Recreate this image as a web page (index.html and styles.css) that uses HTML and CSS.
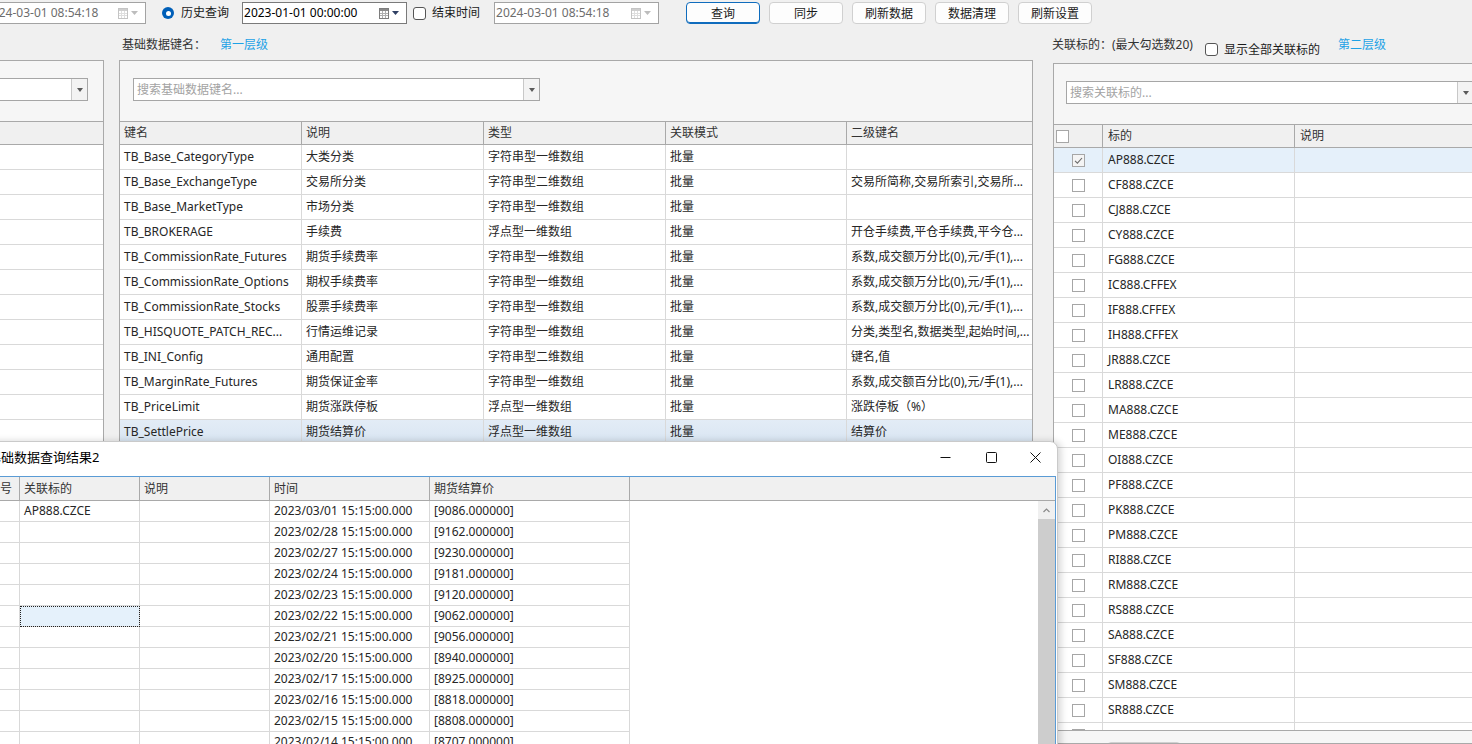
FILE: index.html
```html
<!DOCTYPE html>
<html lang="zh-CN">
<head>
<meta charset="utf-8">
<title>基础数据</title>
<link rel="stylesheet" href="styles.css">
</head>
<body>
<div class="toolbar">
  <div class="dt dt-first dt-disabled">
    <span class="dt-text">2024-03-01 08:54:18</span>
    <span class="dt-icons">
      <svg width="10" height="11" viewBox="0 0 10 11"><rect x="0.5" y="0.5" width="9" height="10" fill="#fff" stroke="#c4c4c4"/><rect x="1" y="1" width="8" height="2" fill="#cfcfcf"/><path d="M1 5.5h8M1 7.5h8M3.5 3v7M6.5 3v7" stroke="#dedede"/></svg>
      <svg width="7" height="4" viewBox="0 0 7 4"><path d="M0 0h7L3.5 4z" fill="#bdbdbd"/></svg>
    </span>
  </div>
  <label class="radio"><span class="radio-mark"></span><span>历史查询</span></label>
  <div class="dt dt-start">
    <span class="dt-text">2023-01-01 00:00:00</span>
    <span class="dt-icons">
      <svg width="10" height="11" viewBox="0 0 10 11"><rect x="0.5" y="0.5" width="9" height="10" fill="#fff" stroke="#7d7d7d"/><rect x="1" y="1" width="8" height="2" fill="#8a8a8a"/><path d="M1 5.5h8M1 7.5h8M3.5 3v7M6.5 3v7" stroke="#b0b0b0"/></svg>
      <svg width="7" height="4" viewBox="0 0 7 4"><path d="M0 0h7L3.5 4z" fill="#2f3f63"/></svg>
    </span>
  </div>
  <label class="check"><span class="check-box"></span><span>结束时间</span></label>
  <div class="dt dt-end dt-disabled">
    <span class="dt-text">2024-03-01 08:54:18</span>
    <span class="dt-icons">
      <svg width="10" height="11" viewBox="0 0 10 11"><rect x="0.5" y="0.5" width="9" height="10" fill="#fff" stroke="#c4c4c4"/><rect x="1" y="1" width="8" height="2" fill="#cfcfcf"/><path d="M1 5.5h8M1 7.5h8M3.5 3v7M6.5 3v7" stroke="#dedede"/></svg>
      <svg width="7" height="4" viewBox="0 0 7 4"><path d="M0 0h7L3.5 4z" fill="#bdbdbd"/></svg>
    </span>
  </div>
  <div class="btns">
    <button class="btn btn-focus">查询</button>
    <button class="btn">同步</button>
    <button class="btn">刷新数据</button>
    <button class="btn">数据清理</button>
    <button class="btn">刷新设置</button>
  </div>
</div>

<div class="main">
  <section class="col col-left">
    <div class="col-label"></div>
    <div class="panel">
      <div class="combo combo-left"><span class="combo-text"></span><span class="combo-btn"><span class="tri"></span></span></div>
      <div class="grid">
        <div class="g-head"><span class="cell c-full"></span></div>
        <div class="g-row"><span class="cell c-full"></span></div>
        <div class="g-row"><span class="cell c-full"></span></div>
        <div class="g-row"><span class="cell c-full"></span></div>
        <div class="g-row"><span class="cell c-full"></span></div>
        <div class="g-row"><span class="cell c-full"></span></div>
        <div class="g-row"><span class="cell c-full"></span></div>
        <div class="g-row"><span class="cell c-full"></span></div>
        <div class="g-row"><span class="cell c-full"></span></div>
        <div class="g-row"><span class="cell c-full"></span></div>
        <div class="g-row"><span class="cell c-full"></span></div>
        <div class="g-row"><span class="cell c-full"></span></div>
        <div class="g-row"><span class="cell c-full"></span></div>
      </div>
    </div>
  </section>

  <section class="col col-mid">
    <div class="col-label"><span>基础数据键名：</span><span class="level">第一层级</span></div>
    <div class="panel">
      <div class="combo combo-mid"><span class="combo-text">搜索基础数据键名...</span><span class="combo-btn"><span class="tri"></span></span></div>
      <div class="grid">
        <div class="g-head">
          <span class="cell m1">键名</span><span class="cell m2">说明</span><span class="cell m3">类型</span><span class="cell m4">关联模式</span><span class="cell m5">二级键名</span>
        </div>
        <div class="g-row"><span class="cell m1">TB_Base_CategoryType</span><span class="cell m2">大类分类</span><span class="cell m3">字符串型一维数组</span><span class="cell m4">批量</span><span class="cell m5"></span></div>
        <div class="g-row"><span class="cell m1">TB_Base_ExchangeType</span><span class="cell m2">交易所分类</span><span class="cell m3">字符串型二维数组</span><span class="cell m4">批量</span><span class="cell m5">交易所简称,交易所索引,交易所...</span></div>
        <div class="g-row"><span class="cell m1">TB_Base_MarketType</span><span class="cell m2">市场分类</span><span class="cell m3">字符串型一维数组</span><span class="cell m4">批量</span><span class="cell m5"></span></div>
        <div class="g-row"><span class="cell m1">TB_BROKERAGE</span><span class="cell m2">手续费</span><span class="cell m3">浮点型一维数组</span><span class="cell m4">批量</span><span class="cell m5">开仓手续费,平仓手续费,平今仓...</span></div>
        <div class="g-row"><span class="cell m1">TB_CommissionRate_Futures</span><span class="cell m2">期货手续费率</span><span class="cell m3">字符串型一维数组</span><span class="cell m4">批量</span><span class="cell m5">系数,成交额万分比(0),元/手(1),...</span></div>
        <div class="g-row"><span class="cell m1">TB_CommissionRate_Options</span><span class="cell m2">期权手续费率</span><span class="cell m3">字符串型一维数组</span><span class="cell m4">批量</span><span class="cell m5">系数,成交额万分比(0),元/手(1),...</span></div>
        <div class="g-row"><span class="cell m1">TB_CommissionRate_Stocks</span><span class="cell m2">股票手续费率</span><span class="cell m3">字符串型一维数组</span><span class="cell m4">批量</span><span class="cell m5">系数,成交额万分比(0),元/手(1),...</span></div>
        <div class="g-row"><span class="cell m1">TB_HISQUOTE_PATCH_REC...</span><span class="cell m2">行情运维记录</span><span class="cell m3">字符串型一维数组</span><span class="cell m4">批量</span><span class="cell m5">分类,类型名,数据类型,起始时间,...</span></div>
        <div class="g-row"><span class="cell m1">TB_INI_Config</span><span class="cell m2">通用配置</span><span class="cell m3">字符串型二维数组</span><span class="cell m4">批量</span><span class="cell m5">键名,值</span></div>
        <div class="g-row"><span class="cell m1">TB_MarginRate_Futures</span><span class="cell m2">期货保证金率</span><span class="cell m3">字符串型一维数组</span><span class="cell m4">批量</span><span class="cell m5">系数,成交额百分比(0),元/手(1),...</span></div>
        <div class="g-row"><span class="cell m1">TB_PriceLimit</span><span class="cell m2">期货涨跌停板</span><span class="cell m3">浮点型一维数组</span><span class="cell m4">批量</span><span class="cell m5">涨跌停板（%）</span></div>
        <div class="g-row g-sel"><span class="cell m1">TB_SettlePrice</span><span class="cell m2">期货结算价</span><span class="cell m3">浮点型一维数组</span><span class="cell m4">批量</span><span class="cell m5">结算价</span></div>
      </div>
    </div>
  </section>

  <section class="col col-right">
    <div class="col-label col-label-r">
      <span>关联标的：(最大勾选数20)</span>
      <label class="check check-r"><span class="check-box"></span><span>显示全部关联标的</span></label>
      <span class="level level-r">第二层级</span>
    </div>
    <div class="panel">
      <div class="combo combo-right"><span class="combo-text">搜索关联标的...</span><span class="combo-btn"><span class="tri"></span></span></div>
      <div class="grid grid-r">
        <div class="g-head"><span class="cell r1"><span class="gcb"></span></span><span class="cell r2">标的</span><span class="cell r3">说明</span></div>
        <div class="g-row g-sel-r"><span class="cell r1"><span class="gcb gcb-on"><svg width="11" height="11" viewBox="0 0 11 11"><path d="M2 5.8l2.4 2.4L9 3" fill="none" stroke="#6b6b6b" stroke-width="1.1"/></svg></span></span><span class="cell r2">AP888.CZCE</span><span class="cell r3"></span></div>
        <div class="g-row"><span class="cell r1"><span class="gcb"></span></span><span class="cell r2">CF888.CZCE</span><span class="cell r3"></span></div>
        <div class="g-row"><span class="cell r1"><span class="gcb"></span></span><span class="cell r2">CJ888.CZCE</span><span class="cell r3"></span></div>
        <div class="g-row"><span class="cell r1"><span class="gcb"></span></span><span class="cell r2">CY888.CZCE</span><span class="cell r3"></span></div>
        <div class="g-row"><span class="cell r1"><span class="gcb"></span></span><span class="cell r2">FG888.CZCE</span><span class="cell r3"></span></div>
        <div class="g-row"><span class="cell r1"><span class="gcb"></span></span><span class="cell r2">IC888.CFFEX</span><span class="cell r3"></span></div>
        <div class="g-row"><span class="cell r1"><span class="gcb"></span></span><span class="cell r2">IF888.CFFEX</span><span class="cell r3"></span></div>
        <div class="g-row"><span class="cell r1"><span class="gcb"></span></span><span class="cell r2">IH888.CFFEX</span><span class="cell r3"></span></div>
        <div class="g-row"><span class="cell r1"><span class="gcb"></span></span><span class="cell r2">JR888.CZCE</span><span class="cell r3"></span></div>
        <div class="g-row"><span class="cell r1"><span class="gcb"></span></span><span class="cell r2">LR888.CZCE</span><span class="cell r3"></span></div>
        <div class="g-row"><span class="cell r1"><span class="gcb"></span></span><span class="cell r2">MA888.CZCE</span><span class="cell r3"></span></div>
        <div class="g-row"><span class="cell r1"><span class="gcb"></span></span><span class="cell r2">ME888.CZCE</span><span class="cell r3"></span></div>
        <div class="g-row"><span class="cell r1"><span class="gcb"></span></span><span class="cell r2">OI888.CZCE</span><span class="cell r3"></span></div>
        <div class="g-row"><span class="cell r1"><span class="gcb"></span></span><span class="cell r2">PF888.CZCE</span><span class="cell r3"></span></div>
        <div class="g-row"><span class="cell r1"><span class="gcb"></span></span><span class="cell r2">PK888.CZCE</span><span class="cell r3"></span></div>
        <div class="g-row"><span class="cell r1"><span class="gcb"></span></span><span class="cell r2">PM888.CZCE</span><span class="cell r3"></span></div>
        <div class="g-row"><span class="cell r1"><span class="gcb"></span></span><span class="cell r2">RI888.CZCE</span><span class="cell r3"></span></div>
        <div class="g-row"><span class="cell r1"><span class="gcb"></span></span><span class="cell r2">RM888.CZCE</span><span class="cell r3"></span></div>
        <div class="g-row"><span class="cell r1"><span class="gcb"></span></span><span class="cell r2">RS888.CZCE</span><span class="cell r3"></span></div>
        <div class="g-row"><span class="cell r1"><span class="gcb"></span></span><span class="cell r2">SA888.CZCE</span><span class="cell r3"></span></div>
        <div class="g-row"><span class="cell r1"><span class="gcb"></span></span><span class="cell r2">SF888.CZCE</span><span class="cell r3"></span></div>
        <div class="g-row"><span class="cell r1"><span class="gcb"></span></span><span class="cell r2">SM888.CZCE</span><span class="cell r3"></span></div>
        <div class="g-row"><span class="cell r1"><span class="gcb"></span></span><span class="cell r2">SR888.CZCE</span><span class="cell r3"></span></div>
        <div class="g-row"><span class="cell r1"><span class="gcb"></span></span><span class="cell r2"></span><span class="cell r3"></span></div>
      </div>
      <div class="r-foot"><span class="foot-btn"></span></div>
    </div>
  </section>
</div>

<div class="dialog">
  <div class="dlg-title">
    <span class="dlg-title-text">基础数据查询结果2</span>
    <div class="win-btns">
      <span class="win-btn"><svg width="11" height="11" viewBox="0 0 11 11"><path d="M0.5 5.5h10" stroke="#111"/></svg></span>
      <span class="win-btn"><svg width="11" height="11" viewBox="0 0 11 11"><rect x="0.5" y="0.5" width="10" height="10" rx="1" fill="none" stroke="#111"/></svg></span>
      <span class="win-btn"><svg width="11" height="11" viewBox="0 0 11 11"><path d="M0.5 0.5l10 10M10.5 0.5l-10 10" stroke="#111"/></svg></span>
    </div>
  </div>
  <div class="dg">
    <div class="dg-head">
      <span class="dc d0">序号</span><span class="dc d1">关联标的</span><span class="dc d2">说明</span><span class="dc d3">时间</span><span class="dc d4">期货结算价</span><span class="dc dfill"></span>
    </div>
    <div class="dg-body">
      <div class="dg-rows">
        <div class="dr"><span class="dc d0"></span><span class="dc d1">AP888.CZCE</span><span class="dc d2"></span><span class="dc d3">2023/03/01 15:15:00.000</span><span class="dc d4">[9086.000000]</span></div>
        <div class="dr"><span class="dc d0"></span><span class="dc d1"></span><span class="dc d2"></span><span class="dc d3">2023/02/28 15:15:00.000</span><span class="dc d4">[9162.000000]</span></div>
        <div class="dr"><span class="dc d0"></span><span class="dc d1"></span><span class="dc d2"></span><span class="dc d3">2023/02/27 15:15:00.000</span><span class="dc d4">[9230.000000]</span></div>
        <div class="dr"><span class="dc d0"></span><span class="dc d1"></span><span class="dc d2"></span><span class="dc d3">2023/02/24 15:15:00.000</span><span class="dc d4">[9181.000000]</span></div>
        <div class="dr"><span class="dc d0"></span><span class="dc d1"></span><span class="dc d2"></span><span class="dc d3">2023/02/23 15:15:00.000</span><span class="dc d4">[9120.000000]</span></div>
        <div class="dr"><span class="dc d0"></span><span class="dc d1 dc-focus"></span><span class="dc d2"></span><span class="dc d3">2023/02/22 15:15:00.000</span><span class="dc d4">[9062.000000]</span></div>
        <div class="dr"><span class="dc d0"></span><span class="dc d1"></span><span class="dc d2"></span><span class="dc d3">2023/02/21 15:15:00.000</span><span class="dc d4">[9056.000000]</span></div>
        <div class="dr"><span class="dc d0"></span><span class="dc d1"></span><span class="dc d2"></span><span class="dc d3">2023/02/20 15:15:00.000</span><span class="dc d4">[8940.000000]</span></div>
        <div class="dr"><span class="dc d0"></span><span class="dc d1"></span><span class="dc d2"></span><span class="dc d3">2023/02/17 15:15:00.000</span><span class="dc d4">[8925.000000]</span></div>
        <div class="dr"><span class="dc d0"></span><span class="dc d1"></span><span class="dc d2"></span><span class="dc d3">2023/02/16 15:15:00.000</span><span class="dc d4">[8818.000000]</span></div>
        <div class="dr"><span class="dc d0"></span><span class="dc d1"></span><span class="dc d2"></span><span class="dc d3">2023/02/15 15:15:00.000</span><span class="dc d4">[8808.000000]</span></div>
        <div class="dr"><span class="dc d0"></span><span class="dc d1"></span><span class="dc d2"></span><span class="dc d3">2023/02/14 15:15:00.000</span><span class="dc d4">[8707.000000]</span></div>
      </div>
      <div class="dg-scroll">
        <span class="sb-up"><svg width="7" height="5" viewBox="0 0 7 5"><path d="M0.5 4L3.5 1l3 3" fill="none" stroke="#8a8a8a" stroke-width="1.2"/></svg></span>
        <span class="sb-thumb"></span>
      </div>
    </div>
  </div>
</div>
</body>
</html>
```

FILE: styles.css
```css
* { box-sizing: border-box; margin: 0; padding: 0; }
html, body { width: 1472px; height: 744px; overflow: hidden; }
body {
  position: relative;
  background: #f0f0f0;
  font-family: "Noto Sans", "Noto Sans CJK SC", sans-serif;
  font-size: 12px;
  color: #262626;
}

/* ---------- toolbar ---------- */
.toolbar { display: flex; align-items: center; height: 26px; }
.dt {
  flex: none;
  display: flex; align-items: center; justify-content: space-between;
  width: 165px; height: 22px;
  background: #fff; border: 1px solid #7a7a7a;
  padding: 0 7px 0 1px;
}
.dt-text { line-height: 20px; color: #000; white-space: nowrap; }
.dt-disabled { border-color: #a3a3a3; }
.dt-disabled .dt-text { color: #6d6d6d; }
.dt-first { width: 163px; margin-left: -17px; }
.dt-start { margin-left: 13px; }
.dt-end { margin-left: 14px; }
.dt-icons { display: flex; align-items: center; gap: 3px; }

.radio { display: flex; align-items: center; gap: 7px; margin-left: 16px; color: #1a1a1a; line-height: 18px; }
.radio-mark {
  width: 12px; height: 12px; border-radius: 50%;
  background: #005fb8;
  display: flex; align-items: center; justify-content: center;
}
.radio-mark::after { content: ""; width: 5px; height: 5px; border-radius: 50%; background: #fff; }

.check { display: flex; align-items: center; gap: 6px; margin-left: 6px; color: #1a1a1a; line-height: 18px; }
.check-box { width: 13px; height: 13px; border: 1px solid #555; border-radius: 3px; background: #fff; }

.btns { display: flex; gap: 9px; margin-left: 27px; }
.btn {
  width: 74px; height: 22px;
  font: inherit; color: #1a1a1a;
  background: #fdfdfd;
  border: 1px solid #d0d0d0; border-radius: 4px;
}
.btn-focus { border-color: #0f6cbd; box-shadow: inset 0 -1px 0 #0f6cbd; }

/* ---------- main columns ---------- */
.main { display: flex; height: 718px; }
.col { flex: none; display: flex; flex-direction: column; }
.col-left { width: 124px; margin-left: -20px; }
.col-mid { width: 914px; margin-left: 15px; }
.col-right { width: 430px; margin-left: 20px; }

.col-label { flex: none; height: 34px; padding: 10px 0 0 3px; line-height: 18px; display: flex; color: #333; }
.col-label-r { height: 37px; padding-left: 0; margin-left: -1px; }
.level { margin-left: 14px; color: #1ea2e6; }
.check-r { margin-left: 12px; }
.level-r { margin-left: 18px; }

.panel {
  flex: 1;
  min-height: 0;
  background: #f6f6f6;
  border: 1px solid #a9a9a9;
  display: flex; flex-direction: column;
  overflow: hidden;
}

.combo {
  flex: none;
  display: flex;
  height: 23px;
  margin-top: 17px;
  background: #fff;
  border: 1px solid #a6a6a6;
}
.combo-left { width: 94px; margin-left: 13px; }
.combo-mid { width: 407px; margin-left: 13px; }
.combo-right { width: 408px; margin-left: 12px; }
.combo-text { flex: 1; padding-left: 3px; line-height: 21px; color: #a3a3a3; white-space: nowrap; overflow: hidden; }
.combo-btn {
  width: 16px;
  border-left: 1px solid #c8c8c8;
  background: #f3f3f3;
  display: flex; align-items: center; justify-content: center;
}
.tri { width: 0; height: 0; border-left: 3.5px solid transparent; border-right: 3.5px solid transparent; border-top: 4px solid #5a5a5a; }

/* ---------- grids ---------- */
.grid { flex: none; margin-top: 20px; background: #fff; }
.g-head {
  display: flex; height: 24px;
  background: #f0f0f0;
  border-top: 1px solid #a9a9a9;
  border-bottom: 1px solid #a9a9a9;
}
.g-row { display: flex; height: 25px; background: #fff; }
.cell {
  flex: none;
  padding-left: 4px;
  line-height: 24px;
  white-space: nowrap; overflow: hidden;
  border-right: 1px solid #d9d9d9;
  border-bottom: 1px solid #d9d9d9;
}
.g-head .cell { line-height: 22px; border-bottom: none; border-right-color: #a9a9a9; color: #333; }
.c-full { width: 100%; border-right: none; }

.m1, .m2, .m3 { width: 182px; }
.m4 { width: 181px; }
.m5 { width: 185px; border-right: none; }
.g-head .m5 { border-right: none; }
.g-sel { background: linear-gradient(#e3ecf6, #d8e5f2); }
.g-sel .cell { border-bottom-color: #cfdbe8; }

.grid-r { height: 607px; overflow: hidden; border-bottom: 1px solid #a9a9a9; }
.r1 { width: 49px; padding-left: 0; display: flex; align-items: center; }
.r2 { width: 192px; padding-left: 5px; }
.r3 { width: 200px; padding-left: 5px; border-right: none; }
.g-head .r1 { padding-left: 2px; }
.g-row .r1 { padding-left: 18px; }
.g-head .r3 { border-right: none; }
.gcb { width: 13px; height: 13px; border: 1px solid #a6a6a6; background: #fff; display: flex; align-items: center; justify-content: center; }
.g-sel-r { background: #e5f0fa; }
.g-sel-r .gcb { background: #f4f4f4; }
.r-foot { flex: none; padding: 11px 0 0 53px; }
.foot-btn { display: block; width: 74px; height: 22px; background: #fdfdfd; border: 1px solid #d0d0d0; border-radius: 4px; }

/* ---------- dialog ---------- */
.dialog {
  position: absolute;
  left: -18px; top: 441px;
  width: 1076px; height: 320px;
  background: #fff;
  border: 1px solid #cacaca;
  border-radius: 0 8px 0 0;
  box-shadow: 3px 0 7px rgba(0, 0, 0, 0.16);
}
.dlg-title { display: flex; align-items: center; height: 30px; padding-left: 5px; }
.dlg-title-text { flex: 1; font-size: 13px; color: #000; line-height: 18px; }
.win-btns { display: flex; }
.win-btn { width: 46px; height: 30px; display: flex; align-items: center; justify-content: center; }
.win-btns .win-btn:last-child { width: 43px; }

.dg {
  margin: 4px 1px 0 0;
  border: 1px solid #5a9bd5;
  border-bottom: none;
  height: 290px;
  display: flex; flex-direction: column;
  background: #fff;
}
.dg-head { display: flex; height: 24px; background: #f0f0f0; border-bottom: 1px solid #a9a9a9; }
.dg-head .dc { line-height: 23px; border-bottom: none; border-right-color: #a9a9a9; color: #333; }
.dg-body { flex: 1; display: flex; }
.dg-rows { flex: 1; }
.dr { display: flex; height: 21px; }
.dc {
  flex: none;
  padding-left: 4px;
  line-height: 20px;
  white-space: nowrap; overflow: hidden;
  border-right: 1px solid #d9d9d9;
  border-bottom: 1px solid #d9d9d9;
}
.d0 { width: 36px; }
.d1 { width: 120px; }
.d2 { width: 130px; }
.d3 { width: 160px; }
.d4 { width: 200px; }
.dfill { flex: 1; border-right: none; }
.dc-focus { background: #e5f1fb; outline: 1px dotted #222; outline-offset: -1px; }

.dg-scroll { width: 17px; display: flex; flex-direction: column; background: #f0f0f0; }
.sb-up { height: 18px; display: flex; align-items: center; justify-content: center; }
.sb-thumb { flex: 1; background: #cdcdcd; }
```
